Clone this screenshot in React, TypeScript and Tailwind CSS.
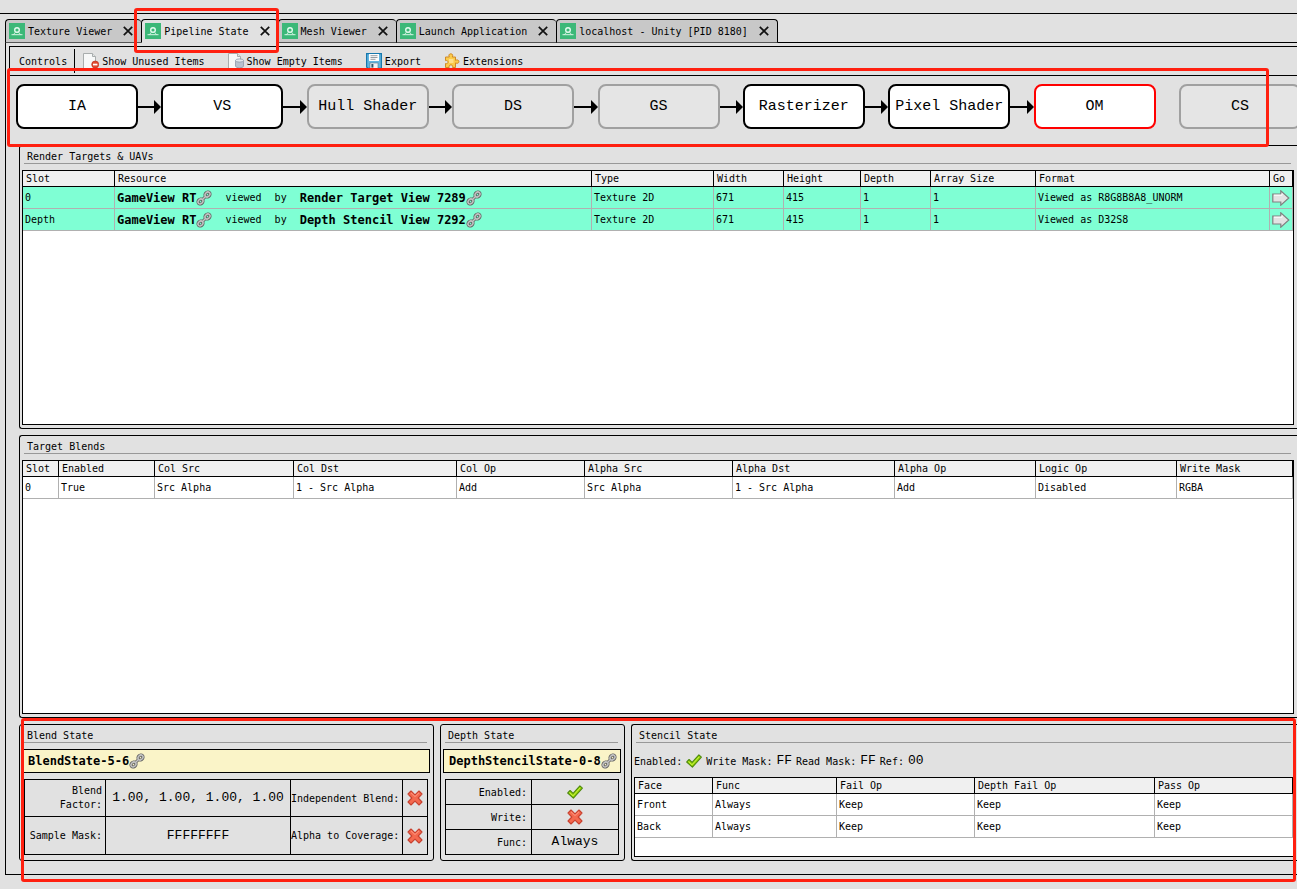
import { useState, type ReactNode } from 'react';

interface Column {
  label: string;
  width: string;
}

interface Stage {
  name: string;
  enabled: boolean;
}

const TABS = ['Texture Viewer', 'Pipeline State', 'Mesh Viewer', 'Launch Application', 'localhost - Unity [PID 8180]'];

const STAGES: Stage[] = [
  { name: 'IA', enabled: true },
  { name: 'VS', enabled: true },
  { name: 'Hull Shader', enabled: false },
  { name: 'DS', enabled: false },
  { name: 'GS', enabled: false },
  { name: 'Rasterizer', enabled: true },
  { name: 'Pixel Shader', enabled: true },
  { name: 'OM', enabled: true },
  { name: 'CS', enabled: false },
];

const TARGET_COLUMNS: Column[] = [
  { label: 'Slot', width: 'w-[92px]' },
  { label: 'Resource', width: 'w-[477px]' },
  { label: 'Type', width: 'w-[122px]' },
  { label: 'Width', width: 'w-[70px]' },
  { label: 'Height', width: 'w-[77px]' },
  { label: 'Depth', width: 'w-[70px]' },
  { label: 'Array Size', width: 'w-[105px]' },
  { label: 'Format', width: 'w-[234px]' },
  { label: 'Go', width: 'w-[23px]' },
];

const BLEND_COLUMNS: Column[] = [
  { label: 'Slot', width: 'w-[36px]' },
  { label: 'Enabled', width: 'w-[96px]' },
  { label: 'Col Src', width: 'w-[139px]' },
  { label: 'Col Dst', width: 'w-[163px]' },
  { label: 'Col Op', width: 'w-[128px]' },
  { label: 'Alpha Src', width: 'w-[148px]' },
  { label: 'Alpha Dst', width: 'w-[162px]' },
  { label: 'Alpha Op', width: 'w-[141px]' },
  { label: 'Logic Op', width: 'w-[141px]' },
  { label: 'Write Mask', width: 'w-[116px]' },
];

const STENCIL_COLUMNS: Column[] = [
  { label: 'Face', width: 'w-[78px]' },
  { label: 'Func', width: 'w-[124px]' },
  { label: 'Fail Op', width: 'w-[138px]' },
  { label: 'Depth Fail Op', width: 'w-[180px]' },
  { label: 'Pass Op', width: 'w-[138px]' },
];

function AppIcon() {
  return (
    <svg viewBox="0 0 16 16" className="w-4 h-4 shrink-0" aria-hidden="true">
      <rect width="16" height="16" fill="#3cb878" />
      <circle cx="8" cy="7" r="2.3" fill="none" stroke="#e4fbef" strokeWidth="1.4" />
      <path d="M2.5 11.7h11M4.300 11.500Q5.800 10.800 6.300 9.300M11.700 11.500Q10.200 10.800 9.700 9.300" fill="none" stroke="#d5f5e4" strokeWidth="1" />
    </svg>
  );
}

function CloseIcon() {
  return (
    <svg viewBox="0 0 10 10" className="block w-[10px] h-[10px]" aria-hidden="true">
      <path d="M.8.8l8.4 8.4M9.2.8L.8 9.2" stroke="#111" strokeWidth="1.7" fill="none" />
    </svg>
  );
}

function PageShape() {
  return (
    <>
      <path d="M.5.5h9l3 3v12H.5z" fill="#f7f8f8" stroke="#a9adad" />
      <path d="M9.500.5v3h3" fill="#e3e6e6" stroke="#a9adad" />
    </>
  );
}

function UnusedIcon() {
  return (
    <svg viewBox="0 0 16 16" className="w-4 h-4 shrink-0" aria-hidden="true">
      <PageShape />
      <circle cx="12.200" cy="11.500" r="3.500" fill="#e2492f" stroke="#b8321c" strokeWidth=".7" />
      <rect x="10" y="10.700" width="4.400" height="1.700" fill="#fff" />
    </svg>
  );
}

function EmptyIcon() {
  return (
    <svg viewBox="0 0 16 16" className="w-4 h-4 shrink-0" aria-hidden="true">
      <PageShape />
      <path d="M7.500 7.500v5.500c0 2.400 8 2.400 8 0V7.500" fill="#b9c2cf" stroke="#8e99a8" strokeWidth=".8" />
      <ellipse cx="11.500" cy="7.500" rx="4" ry="1.600" fill="#e4e9ef" stroke="#8e99a8" strokeWidth=".8" />
    </svg>
  );
}

function SaveIcon() {
  return (
    <svg viewBox="0 0 16 16" className="w-4 h-4 shrink-0" aria-hidden="true">
      <path d="M.6.6h14.800v14.800H2L.6 14z" fill="#62b5e0" stroke="#1778ad" strokeWidth="1.200" />
      <rect x="3" y="1" width="10" height="7" fill="#fdfdfd" />
      <path d="M4.500 2.700h7M4.500 4.500h7M4.500 6.300h5" stroke="#8b9298" strokeWidth=".9" />
      <rect x="4" y="10" width="8" height="5.400" fill="#eef2f5" stroke="#56788c" strokeWidth=".6" />
      <rect x="5.400" y="11" width="2" height="3.600" fill="#2b5870" />
    </svg>
  );
}

function PuzzleIcon() {
  return (
    <svg viewBox="0 0 16 16" className="w-4 h-4 shrink-0" aria-hidden="true">
      <path
        d="M1.500 4h3.800C4.400 2.300 5 .8 6.800.8S9.200 2.300 8.300 4h3.200v3.300c1.700-.9 3.400-.3 3.400 1.300s-1.700 2.200-3.400 1.300V14.500H8.600c.4-1.800-.4-2.600-1.700-2.600s-2.100.8-1.700 2.600H1.500v-4C3.200 11 4 10.200 4 9.100S3.200 7.200 1.500 7.600z"
        fill="#fbcb4b"
        stroke="#d08a26"
        strokeWidth="1"
      />
      <rect x="5" y="6" width="4.500" height="4" fill="#fee08a" />
    </svg>
  );
}

function LinkIcon() {
  return (
    <svg viewBox="0 0 16 16" className="inline-block w-4 h-4 shrink-0 align-middle" aria-hidden="true">
      <path d="M5.800 10.200l4.400-4.400" stroke="#5f5f5f" strokeWidth="3" />
      <g fill="none" stroke="#5f5f5f" strokeWidth="3.200">
        <ellipse cx="4.500" cy="11.500" rx="2.700" ry="2.200" transform="rotate(-45 4.500 11.500)" />
        <ellipse cx="11.500" cy="4.500" rx="2.700" ry="2.200" transform="rotate(-45 11.500 4.500)" />
      </g>
      <g fill="none" stroke="#c4c4c4" strokeWidth="1.500">
        <ellipse cx="4.500" cy="11.500" rx="2.700" ry="2.200" transform="rotate(-45 4.500 11.500)" />
        <ellipse cx="11.500" cy="4.500" rx="2.700" ry="2.200" transform="rotate(-45 11.500 4.500)" />
        <path d="M6 10l4-4" />
      </g>
    </svg>
  );
}

function GoIcon() {
  return (
    <svg viewBox="0 0 18 16" className="block w-[18px] h-4" aria-hidden="true">
      <path d="M.8 4h8V.8L16.800 8l-8 7.200V12h-8z" fill="#e3e3e3" stroke="#808080" strokeWidth="1.200" />
      <path d="M2 5.200h8V3.500" fill="none" stroke="#fff" strokeWidth="1" />
    </svg>
  );
}

function TickIcon() {
  return (
    <svg viewBox="0 0 16 14" className="block w-4 h-[14px] shrink-0" role="img" aria-label="Yes">
      <path d="M.7 8l2.400-2.500 3 2.900L12.900.8l2.500 2.300-9 10.100z" fill="#9bd800" stroke="#4f8a10" strokeWidth="1.100" strokeLinejoin="round" />
      <path d="M2.500 7.500l3.500 3.400 7-8" fill="none" stroke="#c3ee4d" strokeWidth="1" />
    </svg>
  );
}

function CrossIcon() {
  return (
    <svg viewBox="0 0 16 16" className="block w-4 h-4 shrink-0" role="img" aria-label="No">
      <path
        d="M4 1L8 4.800 12 1l3 3-3.800 4L15 12l-3 3-4-3.800L4 15l-3-3 3.800-4L1 4z"
        fill="#f4694f"
        stroke="#c8412f"
        strokeWidth="1.100"
        strokeLinejoin="round"
      />
      <path d="M4 2.800L8 6.500l4-3.700" fill="none" stroke="#ff9c86" strokeWidth="1" />
    </svg>
  );
}

function Group({ title, className, children }: { title: string; className: string; children: ReactNode }) {
  return (
    <section className={`flex flex-col border border-black rounded-[3px] pl-[2px] pr-[3px] pb-[3px] min-w-0 ${className}`}>
      <h2 className="h-[18px] mb-[6px] ml-[2px] mr-[3px] pl-[3px] pt-1 border-b border-[#989898] leading-[14px] shrink-0">{title}</h2>
      {children}
    </section>
  );
}

function DataTable({ columns, rows, rowClass = '' }: { columns: Column[]; rows: ReactNode[][]; rowClass?: string }) {
  return (
    <div className="flex-1 min-h-0 overflow-hidden border border-black bg-white">
      <table className="w-full table-fixed border-separate border-spacing-0 text-left whitespace-nowrap">
        <colgroup>
          {columns.map((column) => (
            <col key={column.label} className={column.width} />
          ))}
        </colgroup>
        <thead>
          <tr className="h-4">
            {columns.map((column) => (
              <th key={column.label} className="h-4 p-0 pl-[3px] leading-[15px] font-normal bg-[#f0f0f0] border-r border-b border-black">
                {column.label}
              </th>
            ))}
          </tr>
        </thead>
        <tbody>
          {rows.map((row, i) => (
            <tr key={i} className={rowClass}>
              {row.map((cell, j) => (
                <td key={j} className="h-[22px] p-0 pt-px pl-[2px] leading-5 border-r border-b border-[#b0b0b0]">
                  {cell}
                </td>
              ))}
            </tr>
          ))}
        </tbody>
      </table>
    </div>
  );
}

function ResourceLink({ name }: { name: string }) {
  return (
    <a href="#" className="inline-flex items-center text-[12px] font-bold">
      {name}
      <LinkIcon />
    </a>
  );
}

function ViewedResource({ view }: { view: string }) {
  return (
    <div className="flex items-center h-5 gap-[13px]">
      <ResourceLink name="GameView RT" />
      <span>viewed</span>
      <span>by</span>
      <ResourceLink name={view} />
    </div>
  );
}

function GoButton() {
  return (
    <button aria-label="Go to resource" className="block">
      <GoIcon />
    </button>
  );
}

function ToolButton({ icon, label }: { icon: ReactNode; label: string }) {
  return (
    <button className="flex items-center gap-[3px]">
      {icon}
      {label}
    </button>
  );
}

function Value({ children }: { children: ReactNode }) {
  return <span className="text-[13px] font-['Liberation_Mono',monospace]">{children}</span>;
}

export default function App() {
  const [activeTab, setActiveTab] = useState('Pipeline State');
  const [activeStage, setActiveStage] = useState('OM');

  return (
    <main className="relative flex flex-col h-screen overflow-hidden bg-[#e1e1e1] pt-[13px] pb-[14px] text-black text-[10px] font-['DejaVu_Sans_Mono',monospace]">
      {/* Window tabs */}
      <nav className="flex shrink-0 pt-[5px] pl-[5px] border-t border-black">
        {TABS.map((tab, i) => {
          const active = tab === activeTab;
          return (
            <div
              key={tab}
              className={`flex items-center h-6 pl-[3px] pr-2 border-t border-l border-b border-t-black border-l-black rounded-t-[4px] whitespace-nowrap ${
                active ? 'bg-[#e1e1e1] border-b-[#e1e1e1]' : 'bg-[#c8c8c8] border-b-[#555]'
              } ${i === TABS.length - 1 ? 'border-r border-r-black' : ''}`}
            >
              <button onClick={() => setActiveTab(tab)} className="flex items-center gap-[3px]">
                <AppIcon />
                {tab}
              </button>
              <button aria-label={`Close ${tab}`} className="ml-[11px]">
                <CloseIcon />
              </button>
            </div>
          );
        })}
        <div className="flex-1 border-b border-black" />
      </nav>

      <div className="flex flex-col flex-1 min-h-0 ml-[5px] pt-[3px] pb-[13px] border-l border-b border-black">
        {/* Toolbar */}
        <div className="flex items-center shrink-0 h-[30px] ml-[3px] pl-[9px] border-t border-l border-b border-black whitespace-nowrap">
          <span>Controls</span>
          <div className="w-px h-6 ml-[7px] mr-2 bg-black" />
          <div className="flex items-center gap-[23px]">
            <ToolButton icon={<UnusedIcon />} label="Show Unused Items" />
            <ToolButton icon={<EmptyIcon />} label="Show Empty Items" />
            <ToolButton icon={<SaveIcon />} label="Export" />
            <ToolButton icon={<PuzzleIcon />} label="Extensions" />
          </div>
        </div>

        {/* Pipeline flow chart */}
        <div className="flex items-center shrink-0 pt-2 pb-4 ml-[10px] -mr-1 text-[15px] font-['Liberation_Mono',monospace] whitespace-nowrap">
          {STAGES.map((stage, i) => (
            <div key={stage.name} className={`flex items-center ${i > 0 ? 'flex-1' : ''}`}>
              {i > 0 && (
                <div className="flex items-center flex-1">
                  {stage.name !== 'CS' && (
                    <>
                      <div className="flex-1 h-[2px] bg-black" />
                      <svg viewBox="0 0 7 14" className="w-[7px] h-[14px]" aria-hidden="true">
                        <path d="M0 0l7 7-7 7z" />
                      </svg>
                    </>
                  )}
                </div>
              )}
              <button
                onClick={() => setActiveStage(stage.name)}
                className={`w-[122px] h-[45px] pt-[2px] shrink-0 border-2 rounded-lg ${stage.enabled ? 'bg-white' : 'bg-[#e5e5e5]'} ${
                  stage.name === activeStage ? 'border-[#f00]' : stage.enabled ? 'border-black' : 'border-[#a0a0a0]'
                }`}
              >
                {stage.name}
              </button>
            </div>
          ))}
        </div>

        <div className="flex flex-col flex-1 min-h-0 gap-[6px] ml-[13px]">
          <Group title="Render Targets & UAVs" className="flex-1 min-h-0 border-r-0 rounded-r-none">
            <DataTable
              columns={TARGET_COLUMNS}
              rowClass="bg-[#7fffd4]"
              rows={[
                ['0', <ViewedResource view="Render Target View 7289" />, 'Texture 2D', '671', '415', '1', '1', 'Viewed as R8G8B8A8_UNORM', <GoButton />],
                ['Depth', <ViewedResource view="Depth Stencil View 7292" />, 'Texture 2D', '671', '415', '1', '1', 'Viewed as D32S8', <GoButton />],
              ]}
            />
          </Group>

          <Group title="Target Blends" className="flex-1 min-h-0 border-r-0 rounded-r-none">
            <DataTable
              columns={BLEND_COLUMNS}
              rows={[['0', 'True', 'Src Alpha', '1 - Src Alpha', 'Add', 'Src Alpha', '1 - Src Alpha', 'Add', 'Disabled', 'RGBA']]}
            />
          </Group>

          <div className="flex shrink-0 gap-[6px]">
            <Group title="Blend State" className="w-[415px] shrink-0">
              <div className="flex items-center h-6 mb-[6px] pl-[5px] border border-black bg-[#faf4c8]">
                <ResourceLink name="BlendState-5-6" />
              </div>
              <div className="grid grid-cols-[80px_1fr_111px_24px] grid-rows-[36px_37px] gap-px p-px mx-[2px] mb-[2px] bg-black *:flex *:items-center *:bg-[#e1e1e1] whitespace-nowrap">
                <div className="justify-end pr-[3px] text-right leading-[14px]">
                  Blend
                  <br />
                  Factor:
                </div>
                <div className="justify-center"><Value>1.00, 1.00, 1.00, 1.00</Value></div>
                <div className="justify-start">Independent Blend:</div>
                <div className="justify-center"><CrossIcon /></div>
                <div className="justify-end pr-[3px]">Sample Mask:</div>
                <div className="justify-center"><Value>FFFFFFFF</Value></div>
                <div className="justify-start">Alpha to Coverage:</div>
                <div className="justify-center"><CrossIcon /></div>
              </div>
            </Group>

            <Group title="Depth State" className="w-[185px] shrink-0">
              <div className="flex items-center h-6 mb-[6px] pl-[5px] border border-black bg-[#faf4c8] overflow-hidden">
                <ResourceLink name="DepthStencilState-0-8" />
              </div>
              <div className="grid grid-cols-[85px_1fr] grid-rows-[24px_24px_24px] gap-px p-px mx-[2px] mb-[2px] bg-black *:flex *:items-center *:bg-[#e1e1e1]">
                <div className="justify-end pr-1">Enabled:</div>
                <div className="justify-center"><TickIcon /></div>
                <div className="justify-end pr-1">Write:</div>
                <div className="justify-center"><CrossIcon /></div>
                <div className="justify-end pr-1">Func:</div>
                <div className="justify-center"><Value>Always</Value></div>
              </div>
            </Group>

            <Group title="Stencil State" className="flex-1 border-r-0 rounded-r-none">
              <div className="flex items-center gap-1 h-6 mb-1 whitespace-nowrap">
                <span>Enabled:</span>
                <TickIcon />
                <span>Write Mask:</span>
                <Value>FF</Value>
                <span>Read Mask:</span>
                <Value>FF</Value>
                <span>Ref:</span>
                <Value>00</Value>
              </div>
              <DataTable
                columns={STENCIL_COLUMNS}
                rows={[
                  ['Front', 'Always', 'Keep', 'Keep', 'Keep'],
                  ['Back', 'Always', 'Keep', 'Keep', 'Keep'],
                ]}
              />
            </Group>
          </div>
        </div>
      </div>

      {/* Red markers over the active tab, the pipeline and the state panels */}
      <div className="absolute left-[134px] top-2 w-[145px] h-[45px] border-3 border-[#ff2010] rounded-[3px] pointer-events-none" />
      <div className="absolute left-[7px] right-7 top-[68px] h-[79px] border-3 border-[#ff2010] rounded-[3px] pointer-events-none" />
      <div className="absolute left-[21px] right-px bottom-[7px] h-[164px] border-3 border-[#ff2010] rounded-[3px] pointer-events-none" />
    </main>
  );
}
